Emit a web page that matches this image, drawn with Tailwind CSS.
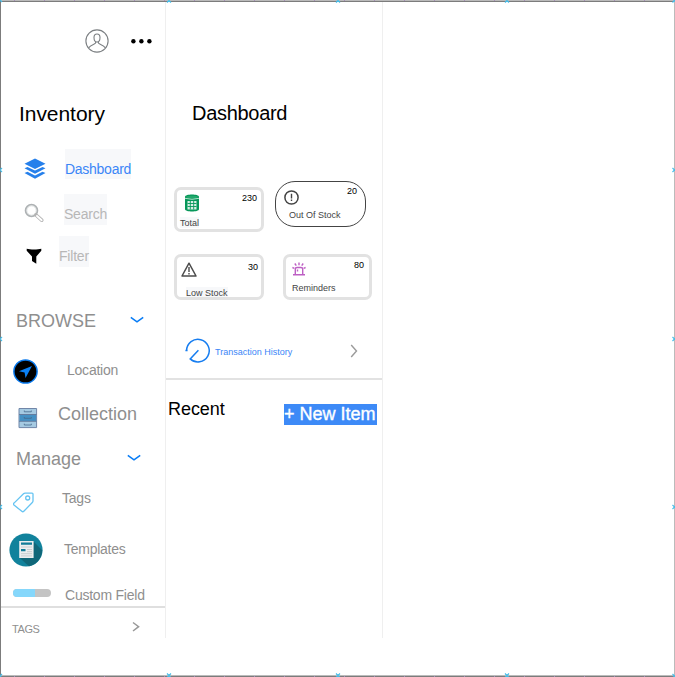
<!DOCTYPE html>
<html lang="en">
<head>
<meta charset="utf-8">
<title>Inventory</title>
<script src="https://cdn.jsdelivr.net/npm/@tailwindcss/browser@4"></script>
</head>
<body class="bg-white">
<div class="relative flex w-[675px] h-[677px] overflow-hidden bg-white pl-px pt-[2px] font-['Liberation_Sans',Arial,sans-serif] text-[14px] leading-5 text-[#8f8f8f]">

  <aside class="w-[165px] h-[636px] shrink-0 border-r border-[#efefef] flex flex-col">
    <div class="h-[78px] flex items-center pl-[84px] gap-[20px] shrink-0">
      <svg class="w-6 h-6" viewBox="0 0 24 24" fill="none" stroke="#7b7f82" stroke-width="1.1"><circle cx="12" cy="12" r="11.1"/><path d="M9 8.500C9 6 10.300 5 12 5s3 1 3 3.500c0 2.300-1 4.500-3 4.500S9 10.800 9 8.500zM10.600 12.500v1.600c0 .8-5.600 1.800-6.800 4.600M13.400 12.500v1.600c0 .8 5.600 1.800 6.800 4.600"/></svg>
      <svg class="w-6 h-6" viewBox="0 0 24 24"><circle cx="4.400" cy="12.200" r="2.200"/><circle cx="12.400" cy="12.200" r="2.200"/><circle cx="20.400" cy="12.200" r="2.200"/></svg>
    </div>
    <h1 class="h-[69px] pt-[22px] pl-[18px] text-[21px] leading-6 tracking-[-0.05px] text-black shrink-0">Inventory</h1>

    <nav class="shrink-0 h-[154px]">
      <a class="flex h-[45px]">
        <svg class="w-[22px] h-[22px] ml-[23px] mt-[9px] mr-[19px]" viewBox="0 0 22 22" fill="#2680eb"><path d="M11 .5 21.500 5.800 11 11 .5 5.800z"/><path d="M.5 10.300 3.500 8.900 11 12.600l7.500-3.700 3 1.400L11 15.700z"/><path d="M.5 15.100 3.500 13.700 11 17.400l7.500-3.700 3 1.400L11 20.700z"/></svg>
        <span class="h-[30px] w-[66px] bg-[#f7f8fa] pt-[10px] text-[#3b86f7] tracking-[-0.27px] whitespace-nowrap">Dashboard</span>
      </a>
      <a class="flex h-[42px]">
        <svg class="w-5 h-5 ml-[23px] mt-[9px] mr-5" viewBox="0 0 20 20" fill="none"><circle cx="7.500" cy="7.500" r="5.900" stroke="#aeb2b4" stroke-width="1.800"/><circle cx="7.500" cy="7.500" r="4.600" stroke="#d9dcdd" stroke-width=".7"/><path d="m12 12 5.700 5.200" stroke="#b3b3b3" stroke-width="3.600" stroke-linecap="round"/><path d="m13 13 4.700 4.200" stroke="#fff" stroke-width="1.900" stroke-linecap="round"/></svg>
        <span class="h-[31px] w-[43px] bg-[#f7f8fa] pt-[10px] text-[#b7b7b7] tracking-[-0.23px]">Search</span>
      </a>
      <a class="flex">
        <svg class="w-4 h-4 ml-[25px] mt-3 mr-[17px]" viewBox="0 0 16 16"><path d="M.7.700C4 1.800 12 1.800 15.300.700v2.100L10.300 8.500v7.200L6 13V8.500L.7 2.800z"/></svg>
        <span class="h-[31px] w-[30px] bg-[#f7f8fa] pt-[10px] text-[#b7b7b7] tracking-[-0.2px]">Filter</span>
      </a>
    </nav>

    <section class="shrink-0 h-[141px]">
      <div class="flex h-[56px] pl-[15px] pt-2 text-[18px]">
        <h2 class="w-[114px]">BROWSE</h2>
        <svg class="w-[14px] h-2 mt-[5px]" viewBox="0 0 14 8" fill="none" stroke="#087cf5" stroke-width="1.600"><path d="m.8 1.300 6.200 4.500 6.200-4.500"/></svg>
      </div>
      <div class="flex h-[45px] pl-3">
        <svg class="w-[25px] h-[25px] mr-[29px]" viewBox="0 0 25 25"><circle cx="12.500" cy="12.500" r="11.600" fill="#000" stroke="#0879ee" stroke-width="1.500"/><path d="M19 6.900 5.900 12.300l5.700 1.100.9 5.600z" fill="#0a80f5"/></svg>
        <span class="pt-px tracking-[-0.23px]">Location</span>
      </div>
      <div class="flex pl-[17px] text-[18px]">
        <svg class="w-[20px] h-[22px] mt-[3px] mr-[20px]" viewBox="0 0 20 22"><path fill="#a5cae2" stroke="#7186a8" d="M1 1.500h17.600V20.600H1z"/><path fill="#4590c3" d="M1.500 8h16.600v6H1.500z"/><path stroke="#647c9e" d="M1 7.500h17.600M1 14.300h17.600"/><path fill="none" stroke="#456a8d" stroke-width=".8" d="M6.300 3.500v1.300h7V3.500M6.300 10v1.300h7V10m-7 6.700V18h7v-1.300"/></svg>
        <span>Collection</span>
      </div>
    </section>

    <section class="shrink-0 h-[162px]">
      <div class="flex h-[43px] pl-[15px] pt-[5px] text-[18px]">
        <h2 class="w-[111px]">Manage</h2>
        <svg class="w-[14px] h-2 mt-[5px]" viewBox="0 0 14 8" fill="none" stroke="#087cf5" stroke-width="1.600"><path d="m.8 1.300 6.200 4.500 6.200-4.500"/></svg>
      </div>
      <div class="flex h-[45px] pl-3">
        <svg class="w-[21px] h-[21px] mt-[5px] mr-[28px]" viewBox="0 0 21 21" fill="none" stroke="#66c4f2" stroke-width="1.300"><path d="m1 11.100 9.500-9.300q.7-.7 1.600-.7h7q.9 0 .9.900v6.900q0 .9-.7 1.600l-8.500 8.800q-1 1-2 0L1 13q-1-1 0-1.900z"/><circle cx="14.700" cy="6" r="2"/></svg>
        <span class="pt-px tracking-[-0.23px]">Tags</span>
      </div>
      <div class="flex h-[52px] pl-2">
        <svg class="w-[34px] h-[34px] mt-px mr-[21px]" viewBox="0 0 34 34"><circle cx="17" cy="17" r="16.600" fill="#11829c"/><path d="m24 8 9.200 9.200A16.600 16.600 0 0 1 20 33.200l-10-9z" fill="#106779"/><path d="M10.200 8h14.400v17H10.200z" fill="#eceff0"/><path d="M12 9.500h11v2.200H12zM12 16h4.500v2.200H12z" fill="#117c98"/><path d="M12 14h11m-5 2.500h5m-5 2.200h5m-11 2h11m-11 2.200h11" stroke="#c5cacc" stroke-width=".9"/></svg>
        <span class="pt-[7px] tracking-[-0.27px]">Templates</span>
      </div>
      <div class="flex pl-3">
        <div class="w-[38px] h-2 mt-[5px] mr-[14px] rounded-full bg-[#c4c4c4] overflow-hidden"><div class="w-[22px] h-2 bg-[#85d7fb]"></div></div>
        <span class="pt-px whitespace-nowrap tracking-[-0.23px]">Custom Field</span>
      </div>
    </section>
    <div class="flex h-[32px] shrink-0 border-t-2 border-[#dfdfdf] pl-[11px] pt-[11px] text-[11px] tracking-[-0.4px]">
      <span class="w-[120px]">TAGS</span>
      <svg class="w-2 h-3 mt-[2px]" viewBox="0 0 8 12" fill="none" stroke="#999" stroke-width="1.500"><path d="m1 1.500 5.600 4.200L1 10"/></svg>
    </div>
  </aside>

  <main class="w-[217px] h-[636px] shrink-0 border-r border-[#efefef]">
    <h1 class="h-[177px] pt-[99px] pl-[26px] text-[20px] leading-6 text-black tracking-[-0.3px]">Dashboard</h1>
    <div class="h-[146px] pl-2 text-[9px] leading-[10px] text-[#444]">
      <div class="flex h-[75px]">
        <div class="w-[90px] h-[45px] mt-2 rounded-[7px] border-3 border-[#e2e2e2] pl-[3px] pr-[4px] pt-[3px]">
          <div class="flex justify-between h-[24px]">
            <svg class="w-4 h-[18px] ml-[4px] mt-px" viewBox="0 0 16 18"><path d="M1 2.800C1-.2 15-.2 15 2.800v12.500c0 3-14 3-14 0z" fill="#07975a"/><ellipse cx="8" cy="3" rx="6" ry="1.300" fill="#21a86b"/><path d="M1 4.300q7 2 14 0" fill="none" stroke="#d9efe5" stroke-width=".8"/><path d="M3.500 7h9v8.500h-9z" fill="#d9efe5"/><path d="M3.500 9.500h9m-9 3h9M6.300 7v8.500M9.700 7v8.500" stroke="#07975a" stroke-width=".9"/></svg>
            <span class="text-black">230</span>
          </div>
          <span class="block w-[19px] pt-[1px] bg-[#f7f8fa]">Total</span>
        </div>
        <div class="w-[91px] h-[46px] ml-[11px] mt-[2px] rounded-[20px] border border-[#444] pl-[8px] pr-2 pt-[4px]">
          <div class="flex justify-between h-[24px]">
            <svg class="w-[15px] h-[15px] mt-[4px]" viewBox="0 0 15 15" fill="none" stroke="#444"><circle cx="7.500" cy="7.500" r="6.600" stroke-width="1.500"/><path d="M7.500 3.800v4.700m0 1v1.500" stroke-width="1.400"/></svg>
            <span class="text-black">20</span>
          </div>
          <span class="block pl-[5px] whitespace-nowrap">Out Of Stock</span>
        </div>
      </div>
      <div class="flex">
        <div class="w-[90px] h-[46px] rounded-[7px] border-3 border-[#e2e2e2] pl-1 pr-[3px] pt-[4px]">
          <div class="flex justify-between h-[26px]">
            <svg class="w-[16px] h-[15px] mt-px" viewBox="0 0 16 15" fill="none" stroke="#4c4c4c" stroke-linejoin="round"><path d="M8 1.200 15 14H1z" stroke-width="1.500"/><path d="M8 5v5m0 1v1.500" stroke-width="1.400"/></svg>
            <span class="pt-[1px] text-black">30</span>
          </div>
          <span class="block w-[42px] ml-[5px] pt-[1px] h-[10px] bg-[#f7f8fa] whitespace-nowrap">Low Stock</span>
        </div>
        <div class="w-[89px] h-[46px] ml-[19px] rounded-[7px] border-3 border-[#e2e2e2] pl-[6px] pr-[5px] pt-[3px]">
          <div class="flex justify-between h-[22px]">
            <svg class="w-[14px] h-[14px] mt-[2px]" viewBox="0 0 14 14" fill="none" stroke="#bd5fc4" stroke-width="1.400"><path d="M1 12.700h12M3.300 12V7.200q0-1.700 1.700-1.700h4q1.700 0 1.700 1.700V12M7 .5v2.800M2.800 1.500 4.300 3.600m6.900-2.100L9.700 3.600M.4 5.500l2 .8m11.200-.8-2 .8M5.500 9.500V7.600"/></svg>
            <span class="text-black">80</span>
          </div>
          <span class="block pt-[1px]">Reminders</span>
        </div>
      </div>
    </div>
    <div class="flex items-center h-[55px] pl-[19px] text-[9px] text-[#3b86f7] border-b-2 border-[#e2e2e2]">
      <svg class="w-[25px] h-[25px] mr-[5px] mb-[3px]" viewBox="0 0 25 25" fill="none" stroke="#167df0" stroke-width="1.500"><path d="M.4 12.500h2.200M1.600 12.500A11.300 11.300 0 1 1 5.200 20.900l8.200-8.600"/></svg>
      <span class="w-[135px] pt-px">Transaction History</span>
      <svg class="w-2 h-[14px] mb-px" viewBox="0 0 8 14" fill="none" stroke="#9a9a9a" stroke-width="1.400"><path d="M1.200 1 6.500 7l-5.300 6"/></svg>
    </div>
    <div class="flex pl-[2px] text-[18px] text-black">
      <h2 class="w-[116px] pt-[19px] tracking-[-0.05px]">Recent</h2>
      <button class="w-[93px] h-[21px] mt-[24px] bg-[#3d8af7] text-white leading-[21px] text-left whitespace-nowrap [-webkit-text-stroke:0.35px_white]">+ New Item</button>
    </div>
  </main>

  <svg class="absolute inset-0 w-[675px] h-[677px] pointer-events-none" viewBox="0 0 675 677" shape-rendering="crispEdges">
    <defs>
      <pattern id="ticks" x="14" y="0" width="30" height="1" patternUnits="userSpaceOnUse"><path d="M0 0h1v1H0z" fill="#a98dbd"/></pattern>
      <g id="handle" fill="none" stroke="#45bde9" stroke-width="1.200" shape-rendering="auto"><path d="m-2-2 4 4m0-4-4 4"/></g>
    </defs>
    <path d="M0 0h675v1H0z" fill="#bababa"/><path d="M0 1h675v1H0zM0 676h675v1H0zM0 0h1v677H0z" fill="#7c7c7c"/>
    <path d="M0 675h675v1H0zM674 0h1v677h-1z" fill="#bbb"/>
    <path d="M0 0h675v1H0zM0 676h675v1H0z" fill="url(#ticks)"/>
    <use href="#handle" x="0" y="0"/><use href="#handle" x="169" y="0.500"/><use href="#handle" x="338" y="0.500"/><use href="#handle" x="507" y="0.500"/><use href="#handle" x="674.500" y="0.500"/>
    <use href="#handle" x="0" y="170"/><use href="#handle" x="0" y="339"/><use href="#handle" x="0" y="507"/><use href="#handle" x="0" y="676"/>
    <use href="#handle" x="674.500" y="170"/><use href="#handle" x="674.500" y="339"/><use href="#handle" x="674.500" y="507"/><use href="#handle" x="674.500" y="676"/>
    <use href="#handle" x="169" y="675.500"/><use href="#handle" x="338" y="675.500"/><use href="#handle" x="507" y="675.500"/>
  </svg>
</div>
</body>
</html>
